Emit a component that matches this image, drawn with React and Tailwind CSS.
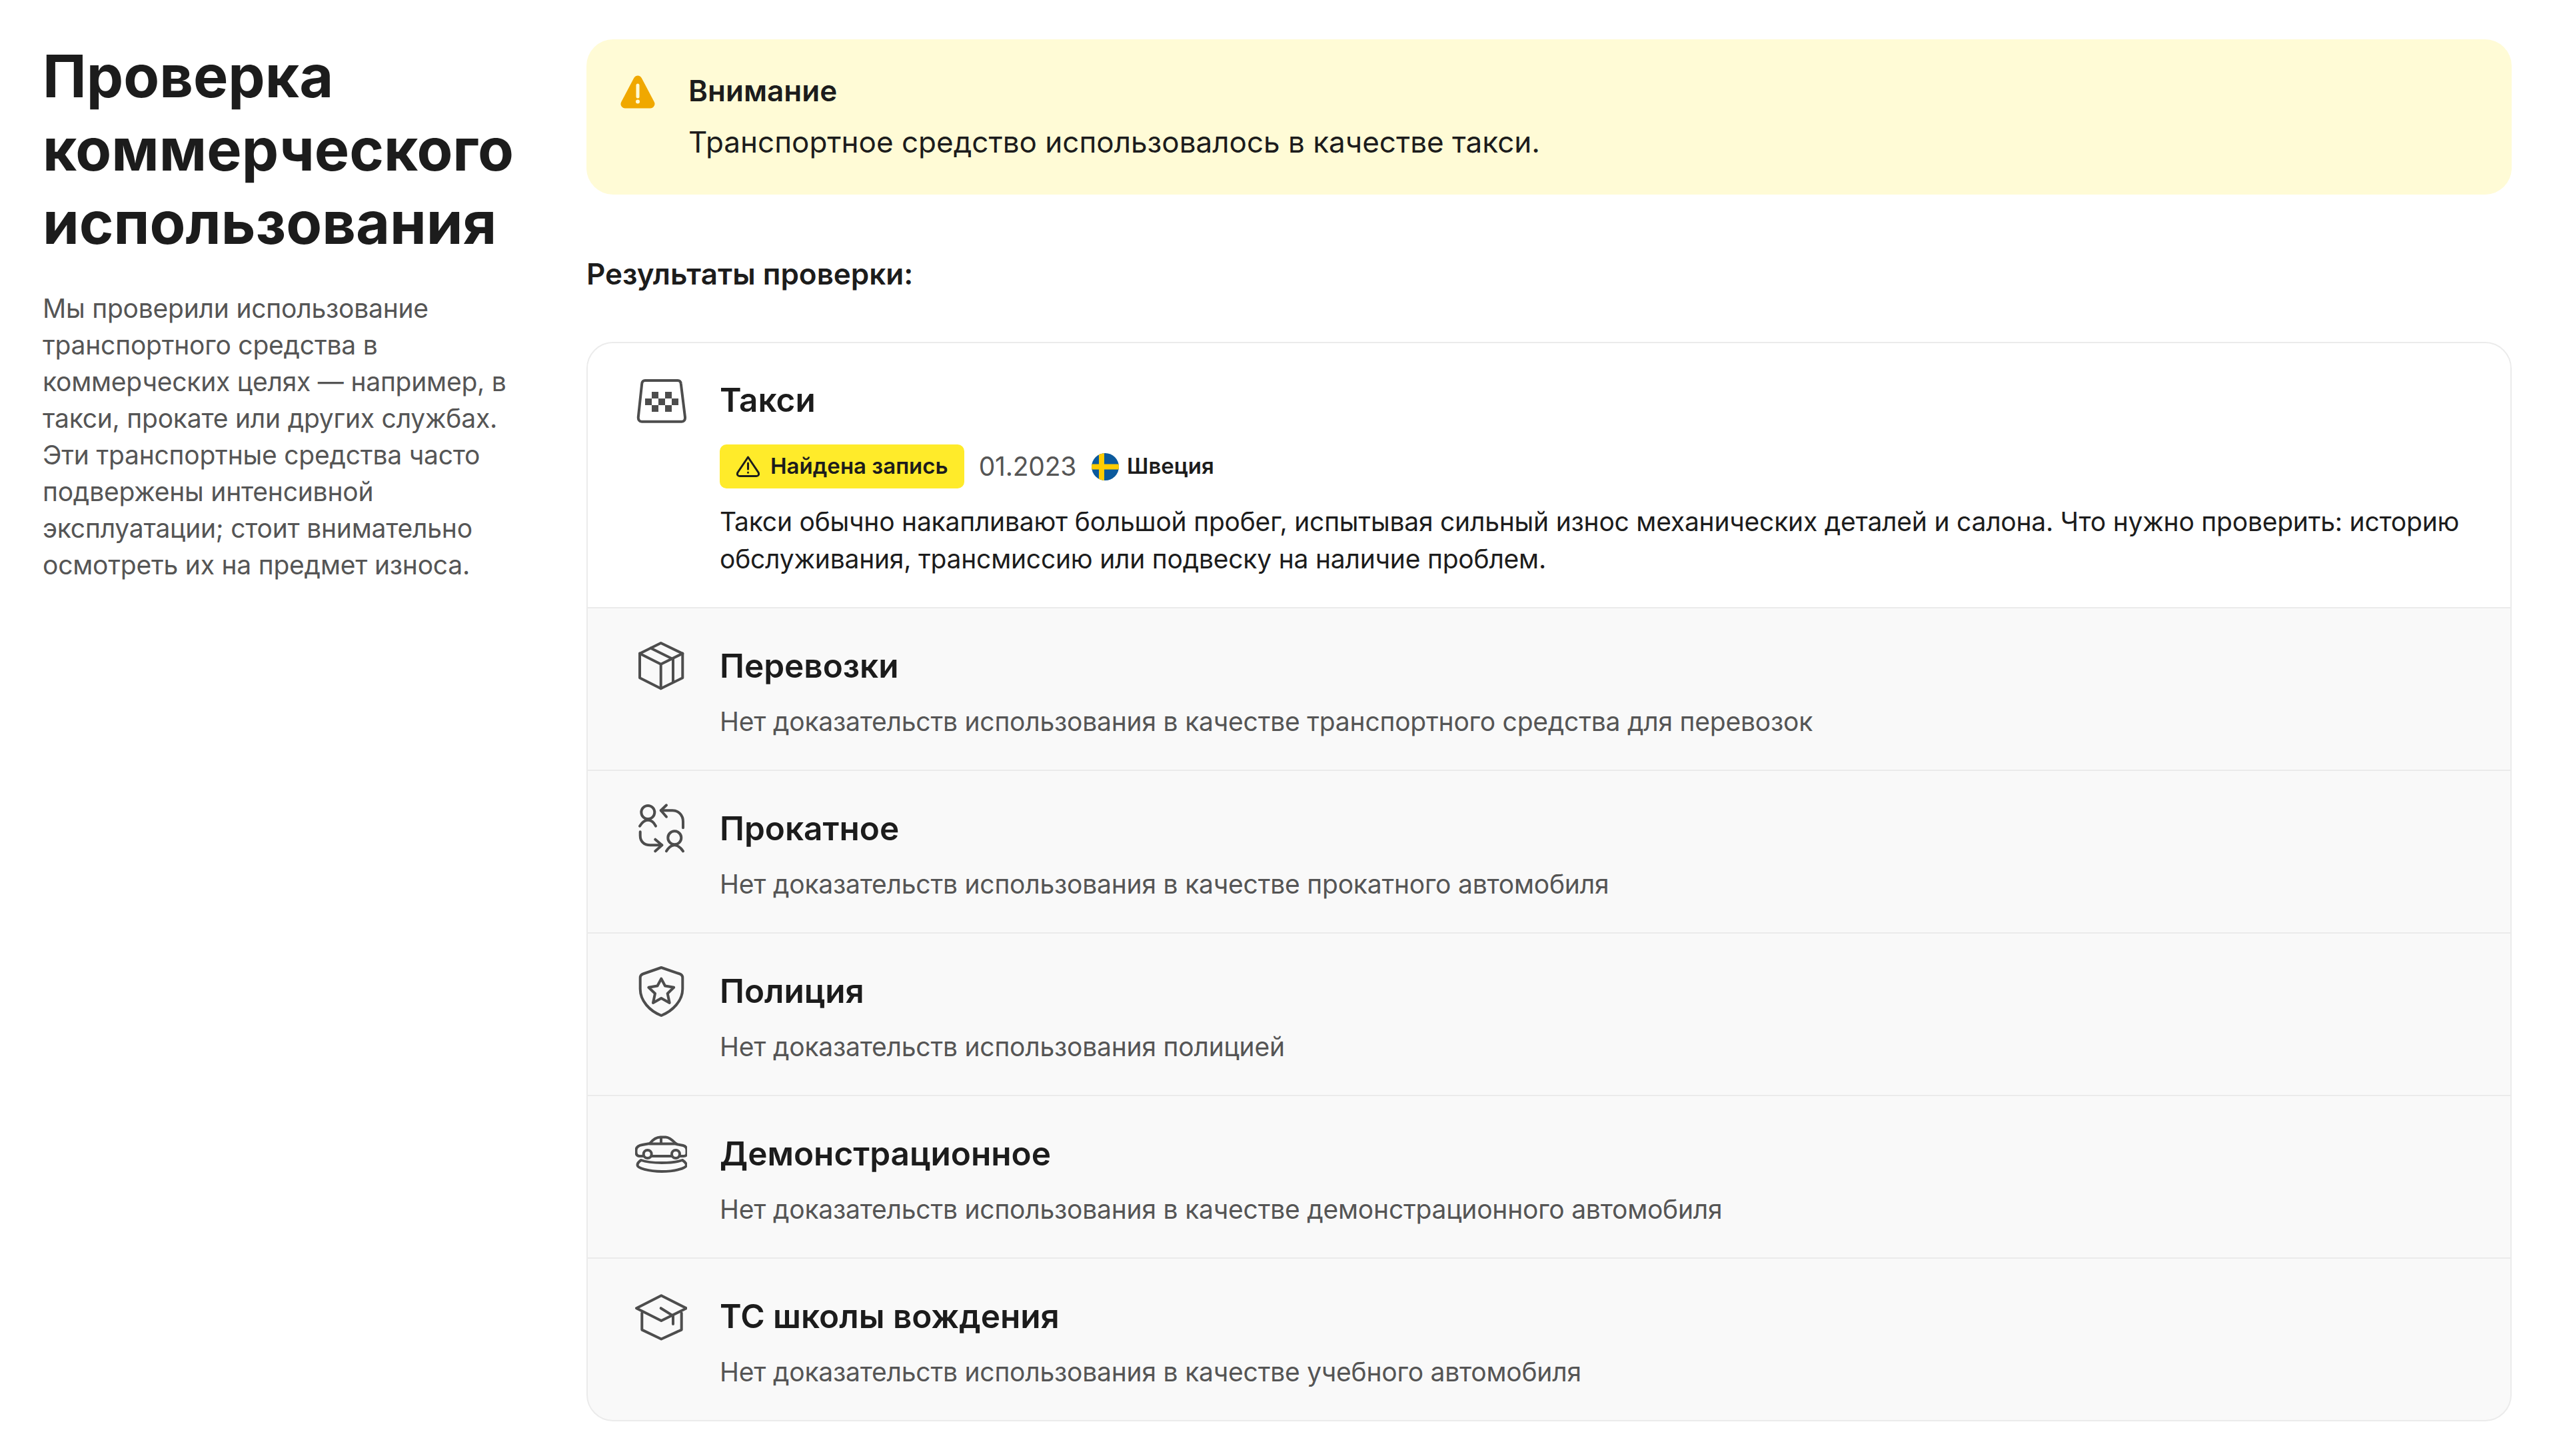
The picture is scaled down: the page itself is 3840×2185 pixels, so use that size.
const rows = [
  {
    title: "Перевозки",
    text: "Нет доказательств использования в качестве транспортного средства для перевозок",
    icon: (
      <>
        <path d="M38.7 5 7 20.7v36.6l31.7 16 32.6-16V20.7z" />
        <path d="M7 20.7l31.7 16 32.6-16M38.7 36.7v36.6" />
        <path d="M23.7 12.7 57 29.3v33.4" />
      </>
    ),
  },
  {
    title: "Прокатное",
    text: "Нет доказательств использования в качестве прокатного автомобиля",
    icon: (
      <>
        <circle cx="19.3" cy="15" r="10" />
        <path d="M7 35.7c3-5 7-9 12.3-9s9.3 4 11.7 9" />
        <path d="M72 38.3V29c0-10-7-16.700-16-16.700H38.700" />
        <path d="M47 4.300l-8.300 8 8.300 9.400" />
        <circle cx="59.300" cy="53.300" r="10" />
        <path d="M47 73.300c3-5 7-9 12.300-9S68.600 68.300 72 73.300" />
        <path d="M7.700 44.300V50c0 9 6 14.300 15 14.300h17.600" />
        <path d="M30.300 55.700l10 8.600-10 9" />
      </>
    ),
  },
  {
    title: "Полиция",
    text: "Нет доказательств использования полицией",
    icon: (
      <>
        <path d="M39.300 4 12 13.500c-3 1-4.300 3-4.300 6V36c0 18 14 33 31.600 40C56.500 69 71.300 54 71.300 36V19.500c0-3-1.300-5-4.300-6z" />
        <path d="M39.300 20.700 45 31.500l13.200 2.300-9.500 9.200 3 14-12.400-7-12.300 7 3-14-9.700-9.200 13.200-2.300z" />
      </>
    ),
  },
  {
    title: "Демонстрационное",
    text: "Нет доказательств использования в качестве демонстрационного автомобиля",
    icon: (
      <>
        <path d="M12.500 43H7c-4 0-5.500-2-5.500-6v-3c0-5 3.500-7 9.500-8l11-2c4-5 10-9.500 16-9.500h8c6 0 12 6.500 16 10.500l10 2c4 1 5.500 4 5.500 7v5c0 3-2 4-5 4h-5M55 43H24.500" />
        <path d="M22 24.500h40M39 15v9.500" />
        <circle cx="18.700" cy="40" r="6" />
        <circle cx="61" cy="40" r="6" />
        <path d="M9 49c-3 2-5.500 5-5.500 7.500C3.500 61 20 66 40 66s37-5 37-9.500c0-2.500-3-5.500-6-7.500-8 3-20 4-31 4s-23-1-31-4z" />
      </>
    ),
  },
  {
    title: "ТС школы вождения",
    text: "Нет доказательств использования в качестве учебного автомобиля",
    icon: (
      <>
        <path d="M39.300 8.300 2 27.200 39.300 46 77 27.200z" />
        <path d="M10.300 34.400v25.200l29 13.900 30.400-13.900V34.400" />
        <path d="M38.700 27.200 57 38.600V51" />
      </>
    ),
  },
]

function Icon({ children }) {
  return (
    <svg
      viewBox="0 0 78 78"
      fill="none"
      stroke="#4d4d4d"
      strokeWidth="4"
      strokeLinecap="round"
      strokeLinejoin="round"
      className="w-[78px] h-[78px] shrink-0"
    >
      {children}
    </svg>
  )
}

export default function App() {
  return (
    <div className="min-h-[2185px] bg-white flex pl-[64px] pr-[71px] pt-[59px] font-['Inter',sans-serif] text-[#1c1c1c]">
      <div className="w-[816px] shrink-0">
        <h1 className="w-[730px] text-[88px] leading-[110px] font-bold">
          Проверка коммерческого использования
        </h1>
        <p className="mt-[46px] w-[725px] text-[39px] leading-[55px] tracking-[-0.22px] text-[#555555]">
          Мы проверили использование транспортного средства в коммерческих целях — например, в такси, прокате или других службах. Эти транспортные средства часто подвержены интенсивной эксплуатации; стоит внимательно осмотреть их на предмет износа.
        </p>
      </div>

      <div className="flex-1 min-w-0">
        <div className="h-[233px] rounded-[40px] bg-[#FFFBD6] flex pl-[51px] pt-[44px]">
          <svg viewBox="0 0 52 50" className="w-[52px] h-[50px] mt-[10px] shrink-0">
            <path
              d="M26 7 7 43h38z"
              fill="#F0A800"
              stroke="#F0A800"
              strokeWidth="13"
              strokeLinejoin="round"
            />
            <path d="M26 15v17" stroke="#FFFBD6" strokeWidth="5" strokeLinecap="round" />
            <circle cx="26" cy="39.500" r="3" fill="#FFFBD6" />
          </svg>
          <div className="ml-[50px]">
            <div className="text-[44px] leading-[66px] font-semibold">Внимание</div>
            <div className="mt-[11px] text-[44px] leading-[66px]">
              Транспортное средство использовалось в качестве такси.
            </div>
          </div>
        </div>

        <h2 className="mt-[86px] text-[44px] leading-[66px] font-semibold">Результаты проверки:</h2>

        <div className="mt-[69px] rounded-[40px] border-2 border-[#ebebeb] overflow-hidden bg-[#f9f9f9]">
          <div className="bg-white flex pl-[71px] pr-[60px] pt-[48px] pb-[44px]">
            <Icon>
              <path d="M15 8h49c3 0 4.500 2 4.800 5l6.200 50c.300 4-1.500 6.700-5 6.700H10c-3.500 0-5.500-2.700-5.200-6.700L10.200 13c.300-3 2-5 4.800-5z" />
              <g fill="#4d4d4d" stroke="none">
                <rect x="25" y="25" width="10" height="10" />
                <rect x="45" y="25" width="10" height="10" />
                <rect x="15" y="35" width="10" height="10" />
                <rect x="35" y="35" width="10" height="10" />
                <rect x="55" y="35" width="10" height="10" />
                <rect x="25" y="45" width="10" height="10" />
                <rect x="45" y="45" width="10" height="10" />
              </g>
            </Icon>
            <div className="ml-[49px] pt-[3px] min-w-0">
              <h3 className="text-[49.500px] leading-[68px] font-semibold">Такси</h3>
              <div className="mt-[33px] flex items-center h-[66px]">
                <span className="h-[66px] rounded-[10px] bg-[#FFEB2A] flex items-center pl-[25px] pr-[24px] text-[33px] font-semibold">
                  <svg viewBox="0 0 35 32" fill="none" stroke="#1c1c1c" strokeWidth="3" strokeLinejoin="round" strokeLinecap="round" className="w-[35px] h-[32px] mr-[16px]">
                    <path d="M17.500 2 2 25c-1.500 3 0 5.500 3 5.500h25c3 0 4.500-2.500 3-5.500z" />
                    <path d="M17.500 11v9M17.500 25v.300" />
                  </svg>
                  Найдена запись
                </span>
                <span className="ml-[22px] text-[39px] tracking-[-0.22px] text-[#555555]">01.2023</span>
                <svg viewBox="0 0 41 41" className="ml-[23px] w-[41px] h-[41px] rounded-full">
                  <rect width="41" height="41" fill="#0B5A9D" />
                  <rect x="11" width="8" height="41" fill="#FFCC00" />
                  <rect y="16.500" width="41" height="8" fill="#FFCC00" />
                </svg>
                <span className="ml-[12px] text-[33px] font-semibold">Швеция</span>
              </div>
              <p className="mt-[22px] text-[39px] leading-[56px] tracking-[-0.22px]">
                Такси обычно накапливают большой пробег, испытывая сильный износ механических деталей и салона. Что нужно проверить: историю обслуживания, трансмиссию или подвеску на наличие проблем.
              </p>
            </div>
          </div>

          {rows.map((row) => (
            <div key={row.title} className="border-t-2 border-[#ebebeb] flex pl-[71px] pt-[47px] pb-[44px]">
              <Icon>{row.icon}</Icon>
              <div className="ml-[49px] pt-[5px]">
                <h3 className="text-[49.500px] leading-[68px] font-semibold">{row.title}</h3>
                <p className="mt-[22px] text-[39px] leading-[56px] tracking-[-0.22px] text-[#555555]">{row.text}</p>
              </div>
            </div>
          ))}
        </div>
      </div>
    </div>
  )
}
